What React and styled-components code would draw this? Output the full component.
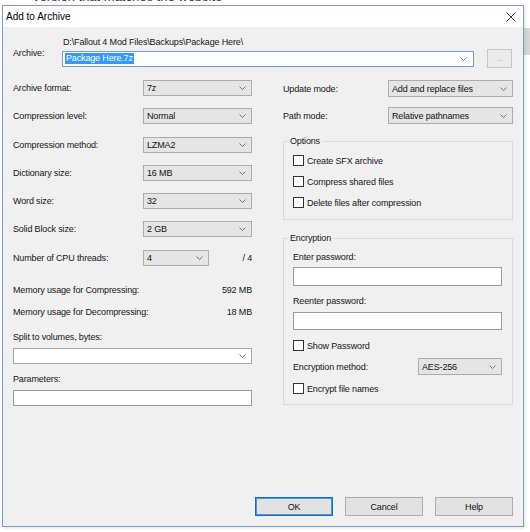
// App.jsx
import React from 'react';
import styled, { createGlobalStyle } from 'styled-components';

const GlobalStyle = createGlobalStyle`
  html, body {
    margin: 0;
    padding: 0;
    background: #ffffff;
  }
  body {
    font-family: "Liberation Sans", Arial, sans-serif;
    font-size: 9px;
    letter-spacing: -0.15px;
    color: #151515;
  }
  * { box-sizing: border-box; }
`;

const Page = styled.div`
  position: relative;
  width: 530px;
  height: 532px;
  overflow: hidden;
  padding: 5px 0 0 2px;
  background: #ffffff;
`;

// text of the page lying behind the dialog, only its lower edge peeks out
const BehindText = styled.div`
  position: absolute;
  top: -11px;
  left: 33px;
  font-size: 13px;
  letter-spacing: 0;
  color: #3a3a3a;
`;

const SideBand = styled.div`
  position: absolute;
  top: 28px;
  right: 0;
  width: 6px;
  height: 27px;
  background: #d6d6d6;
`;

const Window = styled.div`
  position: relative;
  z-index: 1;
  width: 522px;
  height: 522px;
  display: flex;
  flex-direction: column;
  border: 1px solid #7d9fc6;
  box-shadow: 1px 1px 3px rgba(0, 0, 0, 0.12);
`;

const TitleBar = styled.div`
  height: 21px;
  display: flex;
  align-items: center;
  justify-content: space-between;
  padding: 0 7px 0 3px;
  background: #ffffff;
`;

const Title = styled.span`
  font-size: 10px;
  letter-spacing: 0;
  color: #000;
`;

const Body = styled.div`
  flex: 1;
  display: flex;
  flex-direction: column;
  padding: 9px 10px 10px;
  background: #f0f0f0;
`;

const ArchiveRow = styled.div`
  display: flex;
`;

const ArchiveLabel = styled.div`
  width: 49px;
  align-self: center;
  padding-top: 1px;
`;

const ArchiveField = styled.div`
  flex: 1;
  display: flex;
  flex-direction: column;
`;

const PathText = styled.div`
  line-height: 12px;
  padding-left: 1px;
`;

const ComboRow = styled.div`
  display: flex;
  align-items: center;
  margin-top: 1px;
  gap: 13px;
`;

const ArchiveCombo = styled.div`
  width: 412px;
  height: 16px;
  display: flex;
  align-items: center;
  justify-content: space-between;
  padding: 0 6px 0 2px;
  background: #ffffff;
  border: 1px solid #6d9fd6;
`;

const Selected = styled.span`
  background: #3399ff;
  color: #ffffff;
  line-height: 11px;
  padding: 0 1px;
`;

const BrowseButton = styled.div`
  width: 25px;
  height: 19px;
  display: flex;
  align-items: center;
  justify-content: center;
  border: 1px solid #c6c6c6;
  background: #ebebeb;
  color: #9a9a9a;
  font-size: 8px;
`;

const Columns = styled.div`
  display: grid;
  grid-template-columns: 239px 230px;
  column-gap: 31px;
  margin-top: 12px;
`;

const Column = styled.div`
  display: flex;
  flex-direction: column;
`;

const Rows = styled.div`
  display: flex;
  flex-direction: column;
  gap: ${({ $gap }) => $gap}px;
`;

const FieldRow = styled.div`
  display: flex;
  align-items: center;
  margin-top: ${({ $top }) => $top || 0}px;
`;

const Label = styled.div`
  width: ${({ $width }) => $width}px;
  flex-shrink: 0;
  line-height: 12px;
`;

const SelectBox = styled.div`
  width: ${({ $width }) => $width}px;
  height: ${({ $height }) => $height || 16}px;
  display: flex;
  align-items: center;
  justify-content: space-between;
  padding: 0 5px 0 3px;
  background: #e5e5e5;
  border: 1px solid #acacac;
  color: #111;
`;

const ThreadsTotal = styled.div`
  margin-left: auto;
`;

const MemoryBlock = styled.div`
  display: flex;
  flex-direction: column;
  gap: 10px;
  margin-top: 18px;
`;

const MemoryRow = styled.div`
  display: flex;
  justify-content: space-between;
  line-height: 12px;
`;

const TextLine = styled.div`
  line-height: 12px;
  margin-top: ${({ $top }) => $top || 0}px;
`;

const EditCombo = styled.div`
  height: 16px;
  margin-top: 5px;
  display: flex;
  align-items: center;
  justify-content: flex-end;
  padding-right: 5px;
  background: #ffffff;
  border: 1px solid #a5a5a5;
`;

const TextInput = styled.div`
  height: ${({ $height }) => $height || 16}px;
  margin-top: ${({ $top }) => $top || 5}px;
  background: #ffffff;
  border: 1px solid #9c9c9c;
`;

const GroupBox = styled.fieldset`
  margin: ${({ $top }) => $top}px 0 0;
  padding: ${({ $pad }) => $pad} 10px ${({ $bottom }) => $bottom}px 9px;
  border: 1px solid #dadada;
  min-width: 0;
  display: flex;
  flex-direction: column;
`;

const Legend = styled.legend`
  margin-left: -5px;
  padding: 0 2px;
  line-height: 12px;
`;

const CheckRow = styled.div`
  display: flex;
  align-items: center;
  gap: 3px;
  height: 13px;
  margin-top: ${({ $top }) => $top || 0}px;
`;

const Box = styled.span`
  width: 11px;
  height: 11px;
  flex-shrink: 0;
  background: #ffffff;
  border: 1px solid #333333;
`;

const ButtonRow = styled.div`
  margin-top: auto;
  display: flex;
  justify-content: flex-end;
  gap: 12px;
`;

const Button = styled.div`
  width: 78px;
  height: 19px;
  display: flex;
  align-items: center;
  justify-content: center;
  background: #e1e1e1;
  border: 1px solid ${({ $primary }) => ($primary ? '#0f6fc6' : '#adadad')};
  box-shadow: ${({ $primary }) => ($primary ? 'inset 0 0 0 1px #4f95d8' : 'none')};
  color: #111;
`;

const Chevron = () => (
  <svg width="7" height="4" viewBox="0 0 7 4">
    <polyline points="0.5,0.5 3.5,3.5 6.5,0.5" fill="none" stroke="#666" strokeWidth="0.9" />
  </svg>
);

const CloseIcon = () => (
  <svg width="10" height="10" viewBox="0 0 10 10">
    <path d="M0.5 0.5 L9.5 9.5 M9.5 0.5 L0.5 9.5" stroke="#222" strokeWidth="0.9" />
  </svg>
);

const Dropdown = ({ value, width, height }) => (
  <SelectBox $width={width} $height={height}>
    <span>{value}</span>
    <Chevron />
  </SelectBox>
);

const Check = ({ label, top }) => (
  <CheckRow $top={top}>
    <Box />
    <span>{label}</span>
  </CheckRow>
);

const leftRows = [
  ['Archive format:', '7z'],
  ['Compression level:', 'Normal'],
  ['Compression method:', 'LZMA2'],
  ['Dictionary size:', '16 MB'],
  ['Word size:', '32'],
  ['Solid Block size:', '2 GB'],
];

export default function App() {
  return (
    <Page>
      <GlobalStyle />
      <BehindText>version that matches the website</BehindText>
      <SideBand />
      <Window>
        <TitleBar>
          <Title>Add to Archive</Title>
          <CloseIcon />
        </TitleBar>
        <Body>
          <ArchiveRow>
            <ArchiveLabel>Archive:</ArchiveLabel>
            <ArchiveField>
              <PathText>D:\Fallout 4 Mod Files\Backups\Package Here\</PathText>
              <ComboRow>
                <ArchiveCombo>
                  <Selected>Package Here.7z</Selected>
                  <Chevron />
                </ArchiveCombo>
                <BrowseButton>...</BrowseButton>
              </ComboRow>
            </ArchiveField>
          </ArchiveRow>

          <Columns>
            <Column>
              <Rows $gap={12.3}>
                {leftRows.map(([label, value]) => (
                  <FieldRow key={label}>
                    <Label $width={130}>{label}</Label>
                    <Dropdown value={value} width={109} />
                  </FieldRow>
                ))}
                <FieldRow>
                  <Label $width={130}>Number of CPU threads:</Label>
                  <Dropdown value="4" width={66} />
                  <ThreadsTotal>/ 4</ThreadsTotal>
                </FieldRow>
              </Rows>

              <MemoryBlock>
                <MemoryRow>
                  <span>Memory usage for Compressing:</span>
                  <span>592 MB</span>
                </MemoryRow>
                <MemoryRow>
                  <span>Memory usage for Decompressing:</span>
                  <span>18 MB</span>
                </MemoryRow>
              </MemoryBlock>

              <TextLine $top={13}>Split to volumes, bytes:</TextLine>
              <EditCombo>
                <Chevron />
              </EditCombo>
              <TextLine $top={9}>Parameters:</TextLine>
              <TextInput />
            </Column>

            <Column>
              <Rows $gap={10}>
                <FieldRow>
                  <Label $width={105}>Update mode:</Label>
                  <Dropdown value="Add and replace files" width={125} height={17} />
                </FieldRow>
                <FieldRow>
                  <Label $width={105}>Path mode:</Label>
                  <Dropdown value="Relative pathnames" width={125} height={17} />
                </FieldRow>
              </Rows>

              <GroupBox $top={11} $pad="7px" $bottom={10}>
                <Legend>Options</Legend>
                <Check label="Create SFX archive" />
                <Check label="Compress shared files" top={8} />
                <Check label="Delete files after compression" top={8} />
              </GroupBox>

              <GroupBox $top={12} $pad="6.5px" $bottom={9}>
                <Legend>Encryption</Legend>
                <TextLine>Enter password:</TextLine>
                <TextInput $height={19} $top={4} />
                <TextLine $top={9}>Reenter password:</TextLine>
                <TextInput $height={18} $top={5} />
                <Check label="Show Password" top={9.5} />
                <FieldRow $top={6}>
                  <Label $width={125}>Encryption method:</Label>
                  <Dropdown value="AES-256" width={84} height={17} />
                </FieldRow>
                <Check label="Encrypt file names" top={7} />
              </GroupBox>
            </Column>
          </Columns>

          <ButtonRow>
            <Button $primary>OK</Button>
            <Button>Cancel</Button>
            <Button>Help</Button>
          </ButtonRow>
        </Body>
      </Window>
    </Page>
  );
}
